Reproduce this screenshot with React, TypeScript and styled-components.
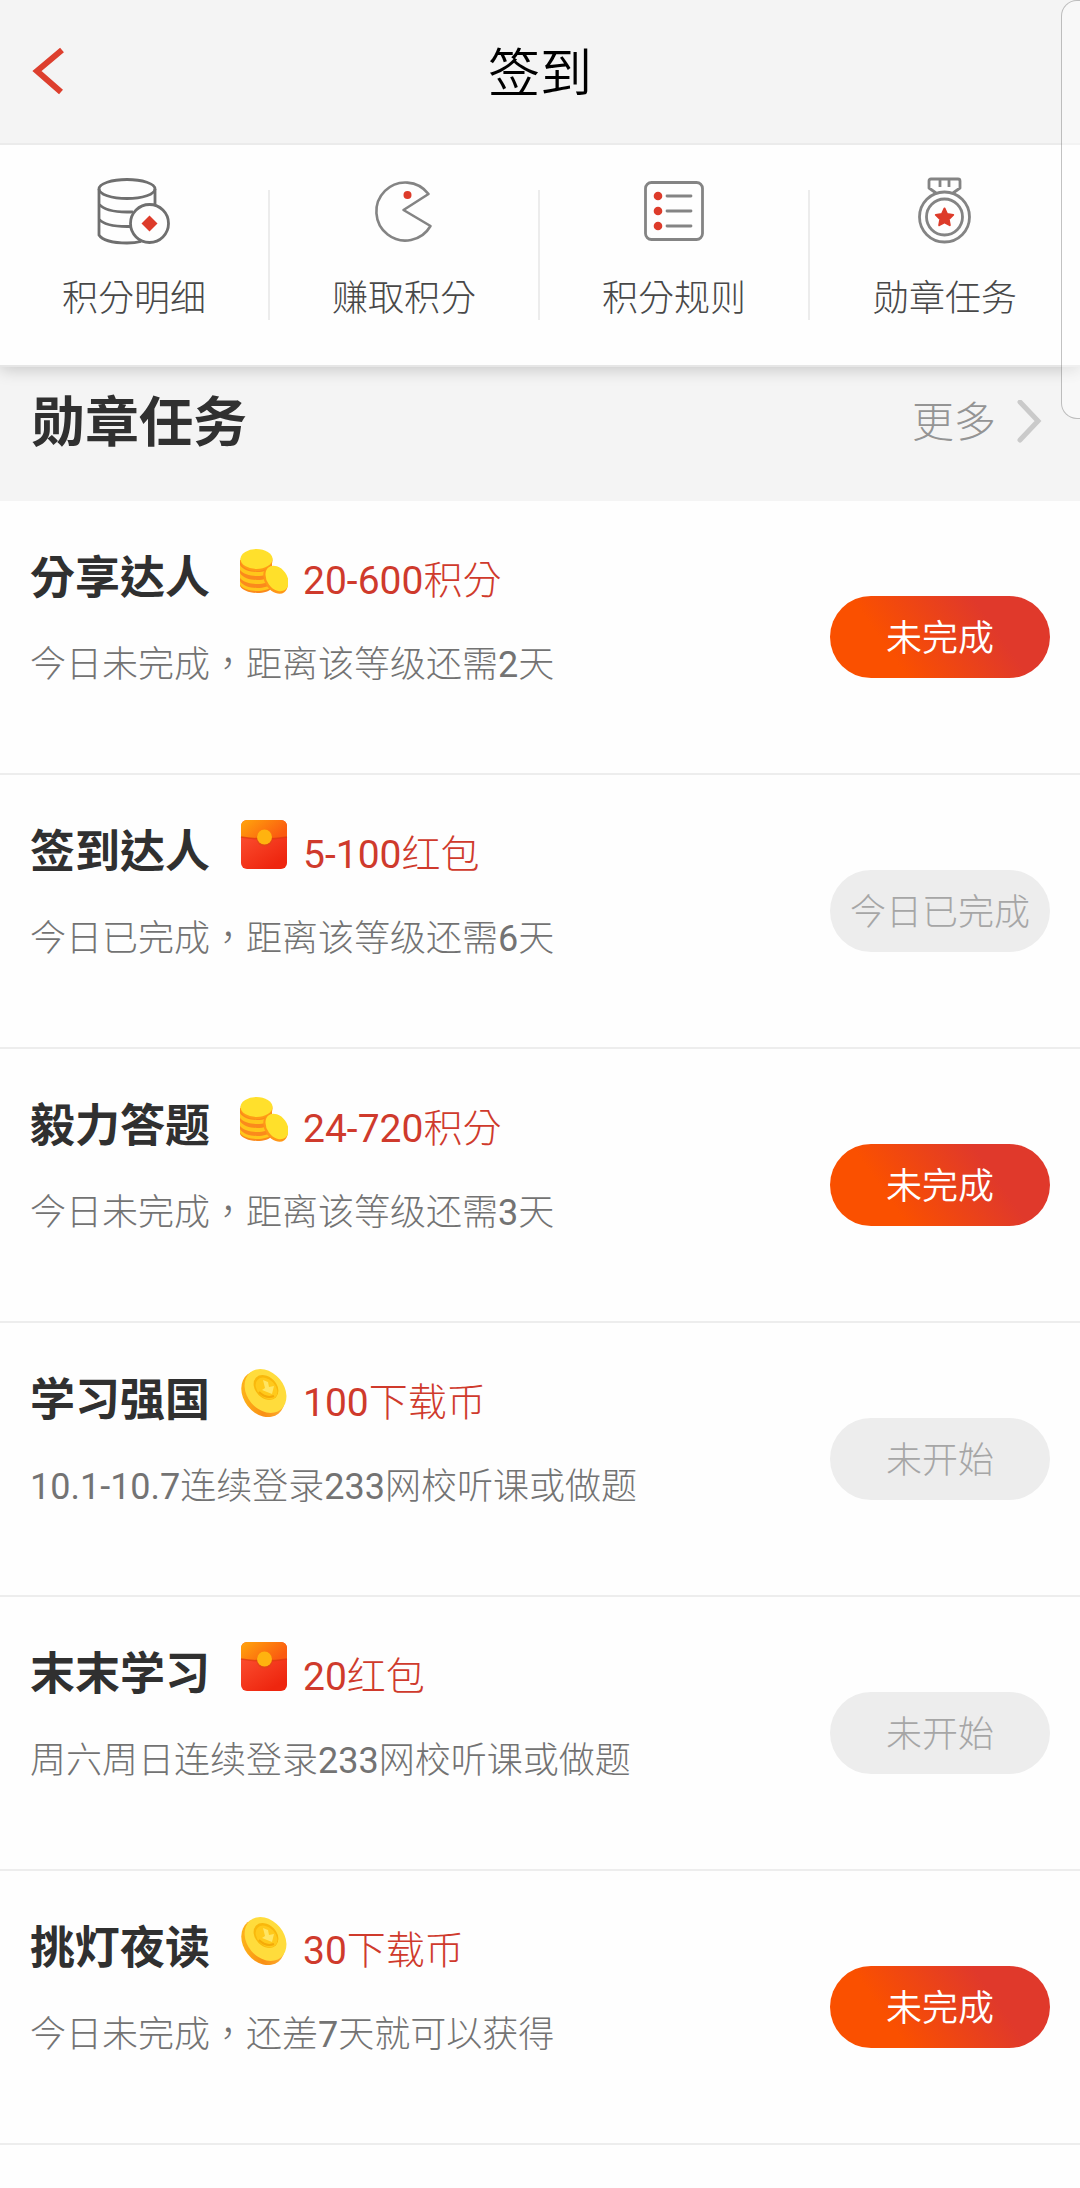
import React from "react";
import styled, { createGlobalStyle, css } from "styled-components";

const fonts = {
  light: `Roboto, "Noto Sans CJK TC Light", "Noto Sans CJK TC", "Noto Sans CJK SC", sans-serif`,
  title: `Roboto, "Noto Sans CJK TC DemiLight", "Noto Sans CJK TC", "Noto Sans CJK SC", sans-serif`,
  bold: `Roboto, "Noto Sans CJK TC", "Noto Sans CJK SC", sans-serif`,
};

const GlobalStyle = createGlobalStyle`
  *, *::before, *::after { box-sizing: border-box; }
  body {
    margin: 0;
    background: #fefefe;
    font-family: ${fonts.light};
    font-weight: 400;
  }
  h1, h2, h3, p, ul { margin: 0; padding: 0; }
  button { border: 0; padding: 0; background: none; font: inherit; cursor: pointer; }
`;

const Page = styled.div`
  position: relative;
  overflow: hidden;
`;

const TopBar = styled.header`
  position: relative;
  z-index: 1;
  display: grid;
  grid-template-columns: 100px 1fr 100px;
  align-items: center;
  height: 145px;
  padding-top: 6px;
  background: #f4f4f4;
  border-bottom: 2px solid #ebebeb;
`;

const BackButton = styled.button`
  display: flex;
  align-items: center;
  height: 100px;
  padding: 0 0 8px 32px;
`;

const PageTitle = styled.h1`
  font-family: ${fonts.title};
  font-size: 52px;
  line-height: 80px;
  font-weight: 400;
  text-align: center;
  color: #000;
`;

const Shortcuts = styled.nav`
  position: relative;
  display: grid;
  grid-template-columns: repeat(4, 1fr);
  padding: 28px 0 39px;
  background: #fefefe;
  border-bottom: 2px solid #e6e6e6;
  box-shadow: 0 2px 16px rgba(0, 0, 0, 0.2);
`;

const Shortcut = styled.a`
  position: relative;
  display: flex;
  flex-direction: column;
  align-items: center;
  gap: 27px;
  padding-right: 2px;
  font-size: 36px;
  line-height: 54px;
  color: #484848;
  text-decoration: none;

  svg { display: block; }

  &:last-child { padding-right: 0; }

  &:not(:last-child)::after {
    content: "";
    position: absolute;
    right: 0;
    top: 17px;
    bottom: 6px;
    width: 2px;
    background: #ececec;
  }
`;

const SectionHead = styled.div`
  display: flex;
  justify-content: space-between;
  align-items: flex-start;
  height: 134px;
  padding: 17px 38px 0 31px;
  background: #f4f4f4;
`;

const SectionTitle = styled.h2`
  font-family: ${fonts.bold};
  font-size: 54px;
  line-height: 80px;
  font-weight: 700;
  color: #303030;
`;

const MoreLink = styled.a`
  display: flex;
  align-items: center;
  gap: 20px;
  font-size: 42px;
  line-height: 78px;
  color: #949494;
  text-decoration: none;
`;

const TaskList = styled.ul`
  list-style: none;
`;

const TaskRow = styled.li`
  display: flex;
  justify-content: space-between;
  align-items: center;
  height: 274px;
  padding: 0 30px;
  background: #fefefe;
  border-bottom: 2px solid #ededed;
`;

const TaskInfo = styled.div`
  align-self: flex-start;
  padding-top: 45px;
`;

const TaskHead = styled.div`
  display: flex;
  align-items: baseline;
  height: 66px;

  svg {
    display: block;
    align-self: flex-start;
    margin: 0 15px 0 30px;
  }
`;

const TaskName = styled.h3`
  font-family: ${fonts.bold};
  font-size: 45px;
  line-height: 66px;
  font-weight: 700;
  color: #303030;
`;

const Reward = styled.span`
  font-size: 39px;
  line-height: 66px;
  color: #cf3a2c;
`;

const TaskNote = styled.p`
  padding-top: 26px;
  font-size: 36px;
  line-height: 54px;
  color: #737373;
`;

const StatusButton = styled.button<{ $active: boolean }>`
  width: 220px;
  height: 82px;
  padding-top: 4px;
  border-radius: 41px;
  font-size: 36px;
  line-height: 78px;
  white-space: nowrap;
  ${(p) =>
    p.$active
      ? css`
          font-family: ${fonts.title};
          color: #fff;
          background: linear-gradient(55deg, #fa5000 28%, #e0392b 72%);
        `
      : css`
          color: #a6a6a6;
          background: #ededed;
        `}
`;

const EdgeHandle = styled.div`
  position: absolute;
  z-index: 2;
  top: 0;
  right: 0;
  width: 19px;
  height: 419px;
  border: 1px solid rgba(0, 0, 0, 0.24);
  border-right: 0;
  border-radius: 16px 0 0 16px;
  background: rgba(255, 255, 255, 0.4);
  pointer-events: none;
`;

const PointsIcon = () => (
  <svg width="74" height="72" viewBox="0 0 74 72" fill="none" stroke="#6f6f6f" strokeWidth="2.8" aria-hidden="true">
    <ellipse cx="30" cy="16" rx="28" ry="9.500" />
    <path d="M2 16V62c3 5 14 8 28 8 5 0 10-.5 14-1.500M58 16V33M2 31c4 5 14 8 28 8 2 0 4 0 6-.2M2 46c4 5 14 7.500 28 7.500h3" />
    <circle cx="52.500" cy="50.500" r="19" fill="#fefefe" />
    <path d="M52.500 42.500l8 8-8 8-8-8z" fill="#dd3b2a" stroke="none" />
  </svg>
);

const EarnIcon = () => (
  <svg width="74" height="72" viewBox="0 0 74 72" fill="none" stroke="#848484" strokeWidth="2.6" strokeLinejoin="round" aria-hidden="true">
    <path d="M61.500 21A29 29 0 1 0 63.500 53L36.500 37z" />
    <circle cx="40.500" cy="22" r="4" fill="#dd3b2a" stroke="none" />
  </svg>
);

const RulesIcon = () => (
  <svg width="74" height="72" viewBox="0 0 74 72" fill="none" stroke="#848484" strokeWidth="2.800" strokeLinecap="round" aria-hidden="true">
    <rect x="8.500" y="9.500" width="57" height="57" rx="6" />
    <path d="M30 23h24M30 38h24M30 53h24" />
    <g fill="#dd3b2a" stroke="none">
      <circle cx="21" cy="23" r="4.300" />
      <circle cx="21" cy="38" r="4.300" />
      <circle cx="21" cy="53" r="4.300" />
    </g>
  </svg>
);

const MedalIcon = () => (
  <svg width="74" height="72" viewBox="0 0 74 72" fill="none" stroke="#848484" strokeWidth="2.800" strokeLinejoin="round" aria-hidden="true">
    <path d="M28 20l-7-5V8q0-2 2-2h27q2 0 2 2v7l-7 5M32 6v8M41 6v8" />
    <circle cx="36.500" cy="44" r="25" />
    <circle cx="36.500" cy="44" r="18" />
    <path d="M36.500 35.500l2.600 5.600 6.100.8-4.500 4.300 1.100 6-5.300-2.900-5.300 2.900 1.100-6-4.500-4.300 6.100-.8z" fill="#dd3b2a" stroke="#dd3b2a" strokeWidth="2" />
  </svg>
);

const CoinsIcon = () => (
  <svg width="48" height="50" viewBox="0 0 48 50" aria-hidden="true">
    <path d="M0 14v26c2 4 9 7 17 7 7 0 13-2 15-5V14z" fill="#fb8a1c" />
    <path d="M0 35c3 5 10 7 17 7s12-2 15-4v3c-3 2-8 4-15 4S3 43 0 39z" fill="#ffc61a" />
    <path d="M0 27c3 5 10 7 17 7s12-2 15-5v4c-3 3-8 5-15 5S3 36 0 32z" fill="#ffc61a" />
    <path d="M0 19c3 5 10 7 17 7s12-2 15-5v4c-3 3-8 5-15 5S3 28 0 24z" fill="#ffc61a" />
    <ellipse cx="16.500" cy="14.500" rx="16" ry="10.500" fill="#ff9c16" />
    <ellipse cx="16.500" cy="13" rx="16" ry="10" fill="#ffe02c" />
    <ellipse cx="35.500" cy="34" rx="10.500" ry="15" transform="rotate(-36 35.500 34)" fill="#ff9718" />
    <ellipse cx="37" cy="32.500" rx="10" ry="14" transform="rotate(-36 37 32.500)" fill="#ffe02a" />
  </svg>
);

const EnvelopeIcon = () => (
  <svg width="48" height="50" viewBox="0 0 48 50" aria-hidden="true">
    <defs>
      <linearGradient id="envelopeBody" x1="0" y1="0" x2="0.600" y2="1">
        <stop offset="0" stopColor="#ff5a38" />
        <stop offset="1" stopColor="#ee260f" />
      </linearGradient>
      <linearGradient id="envelopeFlap" x1="0" y1="0" x2="1" y2="0.500">
        <stop offset="0" stopColor="#ffa60c" />
        <stop offset="1" stopColor="#fb5b10" />
      </linearGradient>
    </defs>
    <rect x="1" y="0" width="46" height="49" rx="6" fill="url(#envelopeBody)" />
    <path d="M1 17V6a6 6 0 0 1 6-6h34a6 6 0 0 1 6 6v11q-23 4-46 0z" fill="url(#envelopeFlap)" />
    <path d="M1 17q23 4 46 0" fill="none" stroke="#dd3510" strokeWidth="1.500" opacity="0.700" />
    <circle cx="24.500" cy="18.500" r="8" fill="#dc4a10" opacity="0.600" />
    <circle cx="24.500" cy="17" r="7.500" fill="#ffb30f" />
  </svg>
);

const DownloadCoinIcon = () => (
  <svg width="48" height="50" viewBox="0 0 48 50" aria-hidden="true">
    <defs>
      <linearGradient id="coinRim" x1="0" y1="0" x2="1" y2="1">
        <stop offset="0" stopColor="#ffc21c" />
        <stop offset="0.500" stopColor="#f98f14" />
        <stop offset="1" stopColor="#ffb93a" />
      </linearGradient>
    </defs>
    <ellipse cx="23" cy="26" rx="19.500" ry="25" transform="rotate(-38 23 26)" fill="url(#coinRim)" />
    <ellipse cx="25.500" cy="23" rx="18.500" ry="24" transform="rotate(-40 25.500 23)" fill="#ffdc3c" />
    <ellipse cx="26" cy="19.500" rx="10.500" ry="14" transform="rotate(-45 26 19.500)" fill="#f9b80c" />
    <ellipse cx="26.500" cy="20.500" rx="9" ry="12.500" transform="rotate(-45 26.500 20.500)" fill="#ffc91b" />
    <path d="M23 12l5 2 1 5 5-1-2 8-10-4 3-2z" fill="#ffe563" />
    <path d="M19 24q7 7 15 4" fill="none" stroke="#f5aa08" strokeWidth="2" />
  </svg>
);

type RewardKind = "coins" | "envelope" | "download";

const rewardIcons: Record<RewardKind, React.FC> = {
  coins: CoinsIcon,
  envelope: EnvelopeIcon,
  download: DownloadCoinIcon,
};

const shortcuts = [
  { label: "积分明细", Icon: PointsIcon },
  { label: "赚取积分", Icon: EarnIcon },
  { label: "积分规则", Icon: RulesIcon },
  { label: "勋章任务", Icon: MedalIcon },
];

const tasks: { name: string; kind: RewardKind; reward: string; note: string; status: string; active: boolean }[] = [
  { name: "分享达人", kind: "coins", reward: "20-600积分", note: "今日未完成，距离该等级还需2天", status: "未完成", active: true },
  { name: "签到达人", kind: "envelope", reward: "5-100红包", note: "今日已完成，距离该等级还需6天", status: "今日已完成", active: false },
  { name: "毅力答题", kind: "coins", reward: "24-720积分", note: "今日未完成，距离该等级还需3天", status: "未完成", active: true },
  { name: "学习强国", kind: "download", reward: "100下载币", note: "10.1-10.7连续登录233网校听课或做题", status: "未开始", active: false },
  { name: "末末学习", kind: "envelope", reward: "20红包", note: "周六周日连续登录233网校听课或做题", status: "未开始", active: false },
  { name: "挑灯夜读", kind: "download", reward: "30下载币", note: "今日未完成，还差7天就可以获得", status: "未完成", active: true },
];

export default function App() {
  return (
    <Page>
      <GlobalStyle />
      <TopBar>
        <BackButton aria-label="返回">
          <svg width="34" height="48" viewBox="0 0 34 48" fill="none" stroke="#dd3f2e" strokeWidth="6" aria-hidden="true">
            <path d="M30 3L5 24l24 21" />
          </svg>
        </BackButton>
        <PageTitle>签到</PageTitle>
      </TopBar>
      <Shortcuts>
        {shortcuts.map(({ label, Icon }) => (
          <Shortcut key={label} href="#">
            <Icon />
            {label}
          </Shortcut>
        ))}
      </Shortcuts>
      <main>
        <SectionHead>
          <SectionTitle>勋章任务</SectionTitle>
          <MoreLink href="#">
            更多
            <svg width="26" height="46" viewBox="0 0 26 46" fill="none" stroke="#cacaca" strokeWidth="5" strokeLinecap="round" aria-hidden="true">
              <path d="M4 2l18 19L4 40" />
            </svg>
          </MoreLink>
        </SectionHead>
        <TaskList>
          {tasks.map((task) => {
            const Icon = rewardIcons[task.kind];
            return (
              <TaskRow key={task.name}>
                <TaskInfo>
                  <TaskHead>
                    <TaskName>{task.name}</TaskName>
                    <Icon />
                    <Reward>{task.reward}</Reward>
                  </TaskHead>
                  <TaskNote>{task.note}</TaskNote>
                </TaskInfo>
                <StatusButton $active={task.active}>{task.status}</StatusButton>
              </TaskRow>
            );
          })}
        </TaskList>
      </main>
      <EdgeHandle />
    </Page>
  );
}
